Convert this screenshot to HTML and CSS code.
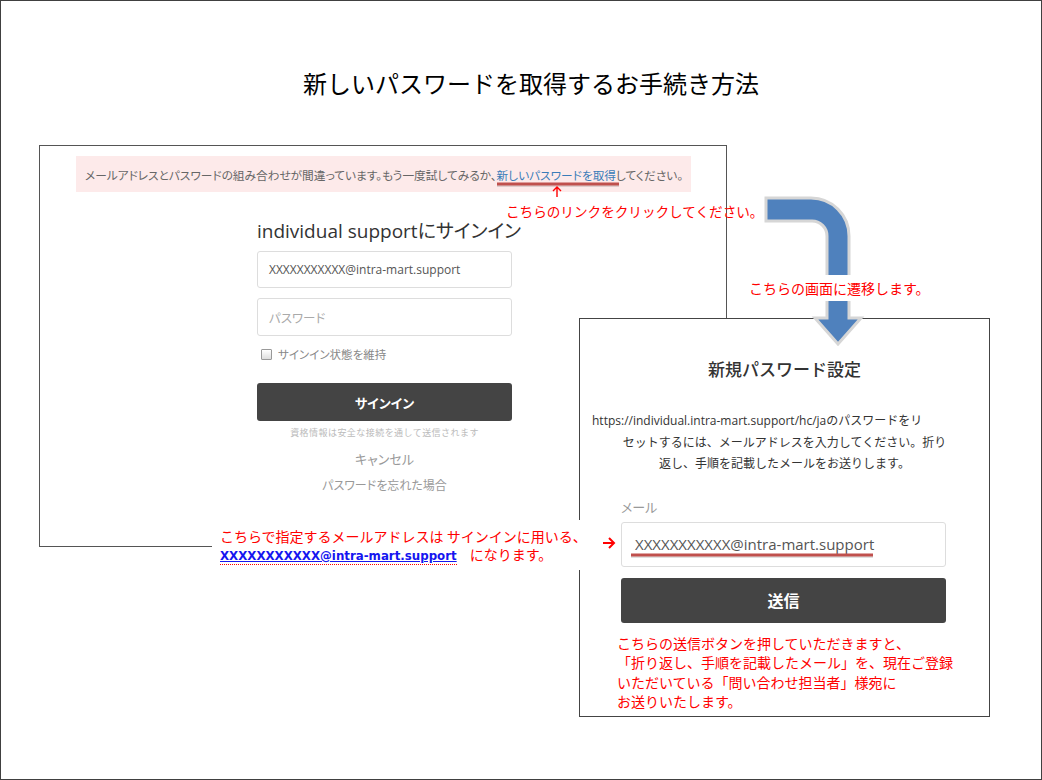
FILE: index.html
```html
<!DOCTYPE html>
<html lang="ja">
<head>
    <meta charset="UTF-8">
    <title>新しいパスワードを取得するお手続き方法</title>
    <link rel="stylesheet" href="styles.css">
</head>
<body>
    <div class="slide">
        <h1 class="slide-title">新しいパスワードを取得するお手続き方法</h1>

        <!-- sign-in screen capture -->
        <div class="shot shot-signin">
            <div class="alert">
                メールアドレスとパスワードの組み合わせが間違っています。もう一度試してみるか、<span class="alert-link">新しいパスワードを取得</span>してください。
            </div>
            <h2 class="signin-title">individual supportにサインイン</h2>
            <div class="signin-form">
                <div class="field field-value">XXXXXXXXXXX@intra-mart.support</div>
                <div class="field field-placeholder">パスワード</div>
                <label class="remember"><span class="checkbox"></span>サインイン状態を維持</label>
                <div class="btn">サインイン</div>
                <p class="secure-note">資格情報は安全な接続を通して送信されます</p>
                <p class="form-link">キャンセル</p>
                <p class="form-link form-link-last">パスワードを忘れた場合</p>
            </div>
        </div>

        <!-- new password screen capture -->
        <div class="shot shot-reset">
            <h2 class="reset-title">新規パスワード設定</h2>
            <p class="reset-text">
                <span class="reset-url">https://individual.intra-mart.support/hc/jaのパスワードをリ</span>
                セットするには、メールアドレスを入力してください。折り<br>
                返し、手順を記載したメールをお送りします。
            </p>
            <div class="reset-form">
                <div class="reset-label">メール</div>
                <div class="field field-large">XXXXXXXXXXX@intra-mart.support</div>
                <div class="btn btn-large">送信</div>
                <p class="note-red">
                    こちらの送信ボタンを押していただきますと、<br>
                    「折り返し、手順を記載したメール」を、現在ご登録<br>
                    いただいている「問い合わせ担当者」様宛に<br>
                    お送りいたします。
                </p>
            </div>
        </div>

        <svg class="overlay" width="1042" height="780" viewBox="0 0 1042 780">
            <path class="flow-arrow" d="M766 198 H811 A38 38 0 0 1 849 236 V318 H861 L838 344 L815 318 H827 V236 A15 15 0 0 0 812 221 H766 Z"/>
            <line class="mark-shadow" x1="497" y1="186" x2="619" y2="186"/>
            <line class="mark" x1="497" y1="184" x2="619" y2="184"/>
            <line class="mark-shadow" x1="631" y1="557" x2="873" y2="557"/>
            <line class="mark" x1="631" y1="555" x2="873" y2="555"/>
            <path class="pointer" d="M557 197 V187 M553 191 L557 187 L561 191"/>
            <path class="pointer pointer-bold" d="M603 543 H614 M609 538 L614 543 L609 548"/>
        </svg>

        <p class="note note-link">こちらのリンクをクリックしてください。</p>
        <p class="note note-move">こちらの画面に遷移します。</p>
        <div class="note note-mail">
            こちらで指定するメールアドレスは サインインに用いる、<br>
            <span class="mail-link">XXXXXXXXXXX@intra-mart.support</span><span class="mail-tail">になります。</span>
        </div>
    </div>
</body>
</html>
```

FILE: styles.css
```css
body {
    margin: 0;
    background: #fff;
    font-family: "Open Sans", "Noto Sans CJK JP", sans-serif;
}

.slide {
    position: relative;
    width: 1042px;
    height: 780px;
    box-sizing: border-box;
    border: 1px solid #404040;
    background: #fff;
    overflow: hidden;
}

.slide-title {
    margin: 66px 0 0;
    font-family: "Noto Sans CJK JP", sans-serif;
    font-size: 24px;
    font-weight: normal;
    line-height: 32px;
    text-align: center;
    color: #000;
    padding-left: 20px;
}

/* screen captures */
.shot {
    position: absolute;
    box-sizing: border-box;
    background: #fff;
}

.shot-signin {
    left: 38px;
    top: 144px;
    width: 688px;
    height: 402px;
    border: 1px solid #555;
}

.shot-reset {
    left: 578px;
    top: 317px;
    width: 411px;
    height: 399px;
    border: 1px solid #444;
}

.alert {
    margin: 10px 0 0 36px;
    width: 615px;
    height: 36px;
    box-sizing: border-box;
    padding-left: 9px;
    display: flex;
    align-items: center;
    background: #fdeaea;
    color: #666;
    font-size: 11.7px;
    font-feature-settings: "palt";
    white-space: nowrap;
}

.alert-link {
    color: #3a7cb8;
}

.signin-title {
    margin: 26px 0 0;
    padding-left: 12px;
    font-size: 19px;
    font-weight: normal;
    line-height: 26px;
    color: #333;
    text-align: center;
    font-feature-settings: "palt";
}

.signin-form {
    width: 255px;
    margin: 7px 0 0 217px;
    display: flex;
    flex-direction: column;
}

.field {
    height: 37px;
    box-sizing: border-box;
    border: 1px solid #ddd;
    border-radius: 3px;
    padding-left: 11px;
    display: flex;
    align-items: center;
    font-size: 12px;
    color: #555;
}

.field + .field {
    margin-top: 10px;
    height: 38px;
}

.field-placeholder {
    color: #aaa;
    font-feature-settings: "palt";
    font-size: 12.5px;
}

.remember {
    margin-top: 11px;
    display: flex;
    align-items: center;
    gap: 6px;
    height: 14px;
    padding-left: 4px;
    font-size: 11.5px;
    color: #888;
    font-feature-settings: "palt";
}

.checkbox {
    width: 9px;
    height: 9px;
    border: 1px solid #999;
    border-radius: 1px;
    background: linear-gradient(#fff, #ddd);
}

.btn {
    margin-top: 22px;
    height: 38px;
    border-radius: 3px;
    background: #444;
    color: #fff;
    font-size: 13px;
    font-weight: bold;
    display: flex;
    align-items: center;
    justify-content: center;
    font-feature-settings: "palt";
}

.secure-note {
    margin: 6px 0 0;
    font-size: 9px;
    line-height: 12px;
    letter-spacing: 0.45px;
    color: #bbb;
    text-align: center;
}

.form-link {
    margin: 11px 0 0;
    font-size: 13px;
    line-height: 18px;
    color: #999;
    text-align: center;
    font-feature-settings: "palt";
}

.form-link-last {
    margin-top: 9px;
    font-size: 12px;
}

/* new password page */
.reset-title {
    margin: 38px 0 0;
    font-family: "Noto Sans CJK JP", sans-serif;
    font-size: 17px;
    font-weight: 500;
    line-height: 24px;
    color: #333;
    text-align: center;
}

.reset-text {
    margin: 29px 0 0;
    padding: 0 12px;
    font-size: 12px;
    line-height: 21.5px;
    color: #333;
    text-align: center;
}

.reset-url {
    display: block;
    text-align: left;
    white-space: nowrap;
}

.reset-form {
    margin: 23px 43px 0 41px;
    display: flex;
    flex-direction: column;
}

.reset-label {
    font-size: 13px;
    line-height: 18px;
    color: #999;
    font-feature-settings: "palt";
}

.field-large {
    margin-top: 6px;
    height: 45px;
    padding-left: 13px;
    font-size: 15px;
    color: #555;
}

.btn-large {
    margin-top: 11px;
    height: 45px;
    font-size: 16px;
}

.note-red {
    margin: 11px 0 0 -4px;
    font-family: "Noto Sans CJK JP", sans-serif;
    font-size: 14px;
    line-height: 19.5px;
    color: #f00;
    white-space: nowrap;
}

/* arrows and marks */
.overlay {
    position: absolute;
    left: -1px;
    top: -1px;
}

.flow-arrow {
    fill: #4f81bd;
    stroke: #d6d6d6;
    stroke-width: 3;
    stroke-linejoin: miter;
}

.mark {
    stroke: #c0504d;
    stroke-width: 3;
}

.mark-shadow {
    stroke: rgba(0, 0, 0, 0.12);
    stroke-width: 2;
}

.pointer {
    fill: none;
    stroke: #f00;
    stroke-width: 1.4;
}

.pointer-bold {
    stroke-width: 2;
}

/* annotations */
.note {
    position: absolute;
    margin: 0;
    font-family: "Noto Sans CJK JP", sans-serif;
    font-size: 14px;
    line-height: 20px;
    color: #f00;
    white-space: nowrap;
}

.note-link {
    left: 505px;
    top: 200px;
    font-size: 13.6px;
}

.note-move {
    left: 742px;
    top: 274px;
    padding: 3px 6px;
    background: #fff;
}

.note-mail {
    left: 211px;
    top: 519px;
    width: 379px;
    height: 50px;
    box-sizing: border-box;
    padding: 7px 0 0 8px;
    line-height: 18px;
    background: #fff;
}

.mail-link {
    display: inline-block;
    line-height: 15px;
    font-family: "DejaVu Sans", sans-serif;
    font-size: 11.8px;
    font-weight: bold;
    color: #1515f0;
    text-decoration: underline;
    border-bottom: 1px dotted #f00;
}

.mail-tail {
    margin-left: 13px;
}
```
